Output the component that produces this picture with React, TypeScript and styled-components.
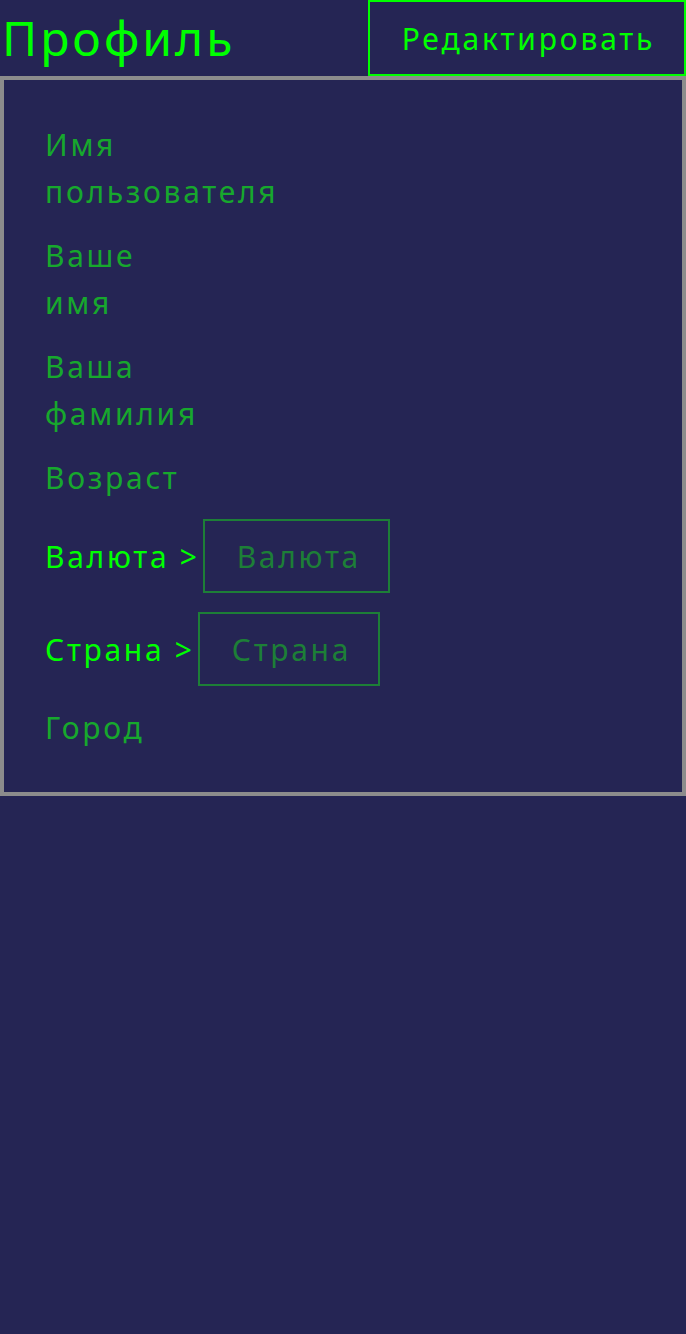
import React from "react";
import styled, { createGlobalStyle } from "styled-components";

const GlobalStyle = createGlobalStyle`
  html, body {
    margin: 0;
    padding: 0;
    background: #252554;
    min-height: 100%;
  }
  body {
    font-family: "Noto Sans", "DejaVu Sans", sans-serif;
  }
  * { box-sizing: border-box; }
`;

const Page = styled.div`
  background: #252554;
  min-height: 1334px;
  width: 686px;
`;

const Header = styled.header`
  display: flex;
  justify-content: space-between;
  align-items: center;
  height: 76px;
`;

const Title = styled.h1`
  margin: 0 0 0 2px;
  font-size: 48px;
  font-weight: 400;
  letter-spacing: 3px;
  line-height: 1;
  color: #00ff00;
`;

const EditButton = styled.button`
  height: 76px;
  width: 318px;
  padding: 0 0 0 3px;
  background: transparent;
  border: 2px solid #00ff00;
  color: #00ff00;
  font-family: inherit;
  font-size: 30px;
  letter-spacing: 2.8px;
  font-weight: 400;
  cursor: pointer;
`;

const Card = styled.section`
  border: 4px solid #8c8c8c;
  padding: 41px 40px 41px 41px;
  display: flex;
  flex-direction: column;
  gap: 17px;
`;

const Label = styled.div<{ $active?: boolean }>`
  font-size: 30px;
  line-height: 47px;
  letter-spacing: 2.7px;
  color: ${(p) => (p.$active ? "#00ff00" : "#17a82d")};
  max-width: 158px;
  white-space: ${(p) => (p.$active ? "nowrap" : "normal")};
`;

const SelectRow = styled.div`
  display: flex;
  align-items: center;
  gap: 3px;
  padding: 1px 0;
`;

const SelectBox = styled.div`
  height: 74px;
  padding: 0 27px 0 32px;
  border: 2px solid #1d7f37;
  color: #1d7f37;
  font-size: 30px;
  letter-spacing: 2.7px;
  display: flex;
  align-items: center;
  justify-content: center;
`;

export default function App() {
  return (
    <Page>
      <GlobalStyle />
      <Header>
        <Title>Профиль</Title>
        <EditButton>Редактировать</EditButton>
      </Header>
      <Card>
        <Label>Имя пользователя</Label>
        <Label>Ваше имя</Label>
        <Label>Ваша фамилия</Label>
        <Label>Возраст</Label>
        <SelectRow>
          <Label $active>Валюта &gt;</Label>
          <SelectBox>Валюта</SelectBox>
        </SelectRow>
        <SelectRow>
          <Label $active>Страна &gt;</Label>
          <SelectBox>Страна</SelectBox>
        </SelectRow>
        <Label>Город</Label>
      </Card>
    </Page>
  );
}
